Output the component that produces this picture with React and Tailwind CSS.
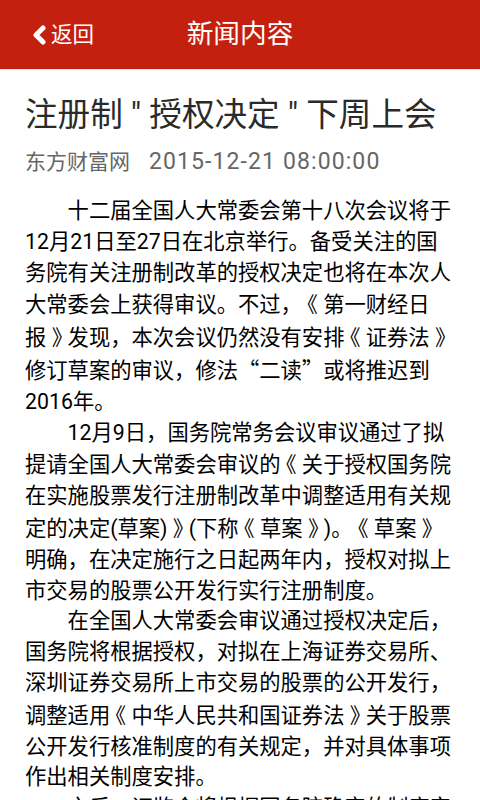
import React from 'react';

const paragraphs = [
  [
    '十二届全国人大常委会第十八次会议将于',
    '12月21日至27日在北京举行。备受关注的国',
    '务院有关注册制改革的授权决定也将在本次人',
    '大常委会上获得审议。不过，《第一财经日',
    '报》发现，本次会议仍然没有安排《证券法》',
    '修订草案的审议，修法“二读”或将推迟到',
    '2016年。',
  ],
  [
    '12月9日，国务院常务会议审议通过了拟',
    '提请全国人大常委会审议的《关于授权国务院',
    '在实施股票发行注册制改革中调整适用有关规',
    '定的决定(草案)》(下称《草案》)。《草案》',
    '明确，在决定施行之日起两年内，授权对拟上',
    '市交易的股票公开发行实行注册制度。',
  ],
  [
    '在全国人大常委会审议通过授权决定后，',
    '国务院将根据授权，对拟在上海证券交易所、',
    '深圳证券交易所上市交易的股票的公开发行，',
    '调整适用《中华人民共和国证券法》关于股票',
    '公开发行核准制度的有关规定，并对具体事项',
    '作出相关制度安排。',
  ],
  ['之后，证监会将根据国务院确定的制度安'],
];

function Line({ text }) {
  const parts = text.split(/([《》“”])/);
  return parts.map((p, i) => {
    // book-title brackets sit centred in a full-width slot on the device
    if (p === '《' || p === '》') {
      return (
        <span key={i} className="px-[0.25em] [font-feature-settings:'halt'] font-['Noto_Sans_CJK_SC',sans-serif]">
          {p}
        </span>
      );
    }
    if (p === '“' || p === '”') {
      return (
        <span key={i} className="font-['Noto_Sans_CJK_SC',sans-serif]">
          {p}
        </span>
      );
    }
    return <React.Fragment key={i}>{p}</React.Fragment>;
  });
}

export default function App() {
  return (
    <div className="w-[480px] h-[800px] overflow-hidden bg-white font-['Roboto','Noto_Sans_CJK_SC',sans-serif]">
      {/* Top bar */}
      <header className="h-[69px] bg-[#c4200f] border-b border-[#f4e4dc] box-content grid grid-cols-[1fr_auto_1fr] items-center text-white">
        <button className="flex items-center pl-[31px] gap-[4px] justify-self-start">
          <svg width="16" height="20" viewBox="0 0 16 20" className="mt-[1px]">
            <polyline
              points="12,3 5,10 12,17"
              fill="none"
              stroke="white"
              strokeWidth="5"
              strokeLinecap="round"
              strokeLinejoin="round"
            />
          </svg>
          <span className="text-[21.5px] leading-none">返回</span>
        </button>
        <h1 className="text-[26.7px] leading-none">新闻内容</h1>
        <div />
      </header>

      <main className="px-[25px]">
        <h2 className="mt-[25px] text-[32.6px] leading-[40px] text-[#2a2a2a] whitespace-nowrap">
          注册制 " 授权决定 " 下周上会
        </h2>
        <div className="mt-[13px] leading-[28px] text-[#666] whitespace-nowrap flex items-center">
          <span className="text-[21px]">东方财富网</span>
          <span className="ml-[19px] text-[23px] tracking-[1.1px]">2015-12-21 08:00:00</span>
        </div>

        <article className="mt-[20px] text-[21.3px] leading-[30.8px] text-black">
          {paragraphs.map((lines, pi) => (
            <div key={pi}>
              {lines.map((line, li) => (
                <div key={li} className={`whitespace-nowrap ${li === 0 ? 'pl-[2em]' : ''}`}>
                  <Line text={line} />
                </div>
              ))}
            </div>
          ))}
        </article>
      </main>
    </div>
  );
}
